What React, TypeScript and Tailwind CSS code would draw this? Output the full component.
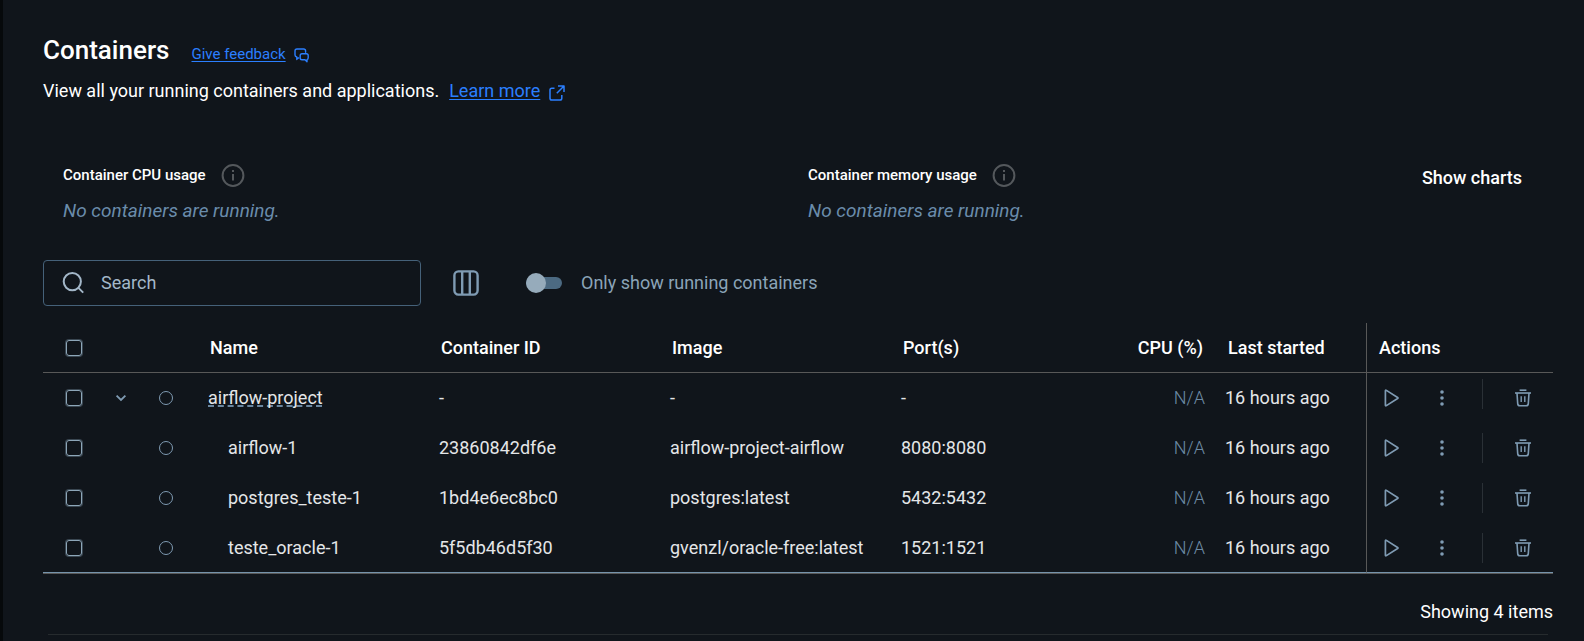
import { useState, type ReactNode } from "react";

type Row = {
  name: string;
  id: string;
  image: string;
  ports: string;
  child: boolean;
};

const rows: Row[] = [
  { name: "airflow-project", id: "-", image: "-", ports: "-", child: false },
  { name: "airflow-1", id: "23860842df6e", image: "airflow-project-airflow", ports: "8080:8080", child: true },
  { name: "postgres_teste-1", id: "1bd4e6ec8bc0", image: "postgres:latest", ports: "5432:5432", child: true },
  { name: "teste_oracle-1", id: "5f5db46d5f30", image: "gvenzl/oracle-free:latest", ports: "1521:1521", child: true },
];

function FeedbackIcon() {
  return (
    <svg width="16" height="16" viewBox="0 0 16 16" fill="none" stroke="currentColor" strokeWidth="1.4" strokeLinejoin="round" strokeLinecap="round" aria-hidden="true">
      <path d="M4.6 11 H4 L2.8 12.4 V10 Q1 9.6 1 8 V4 Q1 2 3 2 H9.6 Q11.6 2 11.6 4 V5.2" />
      <path d="M8 6.8 H12.4 Q14.2 6.8 14.2 8.6 V10.8 Q14.2 12.4 13 12.6 V14.8 L11 12.8 H8 Q6.2 12.8 6.2 11 V8.6 Q6.2 6.8 8 6.8 Z" />
    </svg>
  );
}

function ExternalIcon() {
  return (
    <svg width="18" height="18" viewBox="0 0 18 18" fill="none" stroke="currentColor" strokeWidth="1.5" strokeLinejoin="round" aria-hidden="true">
      <path d="M6.5 4.2 H3.8 Q2 4.2 2 6 V14.2 Q2 16 3.8 16 H12 Q13.8 16 13.8 14.2 V11" />
      <path d="M10 2 H16 V8 M16 2 L8.8 9.2" />
    </svg>
  );
}

function InfoIcon() {
  return (
    <svg width="24" height="24" viewBox="0 0 24 24" fill="none" stroke="currentColor" strokeWidth="2" aria-hidden="true">
      <circle cx="12" cy="12.5" r="10.4" />
      <path d="M12 11 V17.5" />
      <path d="M12 7 V9" />
    </svg>
  );
}

function SearchIcon() {
  return (
    <svg width="22" height="22" viewBox="0 0 22 22" fill="none" stroke="currentColor" strokeWidth="2" aria-hidden="true">
      <circle cx="10.3" cy="9.6" r="8.6" />
      <path d="M16.2 15.6 L21.2 20.6" />
    </svg>
  );
}

function ColumnsIcon() {
  return (
    <svg width="26" height="26" viewBox="0 0 26 26" fill="none" stroke="currentColor" strokeWidth="2.4" aria-hidden="true">
      <rect x="1.4" y="1.4" width="23.2" height="23.2" rx="4" />
      <path d="M9.2 1.5 V24.5 M16.8 1.5 V24.5" />
    </svg>
  );
}

function PlayIcon() {
  return (
    <svg width="16" height="18" viewBox="0 0 16 18" fill="none" stroke="currentColor" strokeWidth="1.7" strokeLinejoin="round" aria-hidden="true">
      <path d="M1.4 1.9 Q1.4 0.8 2.4 1.4 L13.6 8.5 Q14.4 9 13.6 9.5 L2.4 16.6 Q1.4 17.2 1.4 16.1 Z" />
    </svg>
  );
}

function DotsIcon() {
  return (
    <svg width="6" height="18" viewBox="0 0 6 18" fill="currentColor" aria-hidden="true">
      <circle cx="3" cy="3" r="1.8" />
      <circle cx="3" cy="9" r="1.8" />
      <circle cx="3" cy="15" r="1.8" />
    </svg>
  );
}

function TrashIcon() {
  return (
    <svg width="18" height="18" viewBox="0 0 18 18" fill="none" stroke="currentColor" strokeWidth="1.6" aria-hidden="true">
      <path d="M5.6 1.2 H12.4" />
      <path d="M1 4 H17" />
      <path d="M3 4 L3.7 14.6 Q3.9 16.8 5.8 16.8 H12.2 Q14.1 16.8 14.3 14.6 L15 4" />
      <path d="M7.2 7.2 V13 M10.8 7.2 V13" strokeWidth="1.4" />
    </svg>
  );
}

function ChevronIcon() {
  return (
    <svg width="12" height="8" viewBox="0 0 12 8" fill="none" stroke="currentColor" strokeWidth="1.8" aria-hidden="true">
      <path d="M1.6 1.6 L6 6 L10.4 1.6" />
    </svg>
  );
}

function Check({ label }: { label: string }) {
  return (
    <input
      type="checkbox"
      aria-label={label}
      className="block size-4 appearance-none rounded-[3px] border border-[#8da6b8] shadow-[0_0_0_1px_#3a4752] checked:bg-[#8da6b8]"
    />
  );
}

function Usage({ title }: { title: string }) {
  return (
    <section className="flex flex-col gap-3">
      <div className="flex items-center gap-[15px]">
        <h2 className="text-[15px] leading-6 font-medium">{title}</h2>
        <button type="button" aria-label={`About ${title}`} className="text-[#54585c]">
          <InfoIcon />
        </button>
      </div>
      <p className="text-[19px] leading-6 text-[#6a8cab] italic">No containers are running.</p>
    </section>
  );
}

function Th({ children, className = "px-3" }: { children?: ReactNode; className?: string }) {
  return (
    <th scope="col" className={`h-[50px] border-b border-[#585858] text-left text-lg font-medium ${className}`}>
      {children}
    </th>
  );
}

export default function App() {
  const [onlyRunning, setOnlyRunning] = useState(false);
  return (
    <div className="min-h-screen border-l-[3px] border-[#06090b] bg-[#10151b] pr-[31px] pl-10 font-[Roboto,sans-serif] text-white">
      <header className="pt-[34px]">
        <div className="flex items-baseline gap-[22px]">
          <h1 className="text-[26px] leading-8 font-medium">Containers</h1>
          <a href="#feedback" className="flex items-center gap-2 text-[15px] leading-5 text-[#2b7fff]">
            <span className="underline underline-offset-2">Give feedback</span>
            <span className="pt-0.5">
              <FeedbackIcon />
            </span>
          </a>
        </div>
        <p className="mt-[13px] flex items-center gap-[10px] text-lg leading-6">
          View all your running containers and applications.
          <a href="#learn" className="flex items-center gap-2 text-[#2b7fff]">
            <span className="underline underline-offset-2">Learn more</span>
            <span className="pt-1">
              <ExternalIcon />
            </span>
          </a>
        </p>
      </header>

      <div className="mt-[60px] flex items-start justify-between pr-[31px] pl-5">
        <div className="grid grow grid-cols-[745px_1fr]">
          <Usage title="Container CPU usage" />
          <Usage title="Container memory usage" />
        </div>
        <button type="button" className="mt-[3px] text-lg leading-6 font-medium">
          Show charts
        </button>
      </div>

      <div className="mt-[37px] flex items-center">
        <label className="flex h-[46px] w-[378px] items-center gap-[17px] rounded border border-[#456179] pl-[18px] text-[#a3b7c8]">
          <SearchIcon />
          <input
            type="search"
            aria-label="Search"
            placeholder="Search"
            className="min-w-0 grow bg-transparent text-lg outline-none placeholder:text-[#a3b7c8]"
          />
        </label>
        <button type="button" aria-label="Choose columns" className="ml-8 text-[#7f9bb3]">
          <ColumnsIcon />
        </button>
        <label className="ml-[47px] flex items-center gap-[19px] text-lg text-[#8ba4b8]">
          <span className="grid h-5 w-9 items-center">
            <input
              type="checkbox"
              role="switch"
              checked={onlyRunning}
              onChange={(e) => setOnlyRunning(e.target.checked)}
              className="peer col-start-1 row-start-1 h-3 w-9 appearance-none rounded-full bg-[#4c6a82]"
            />
            <span className="col-start-1 row-start-1 size-5 rounded-full bg-[#96abbb] peer-checked:justify-self-end" />
          </span>
          Only show running containers
        </label>
      </div>

      <table className="mt-[17px] w-full table-fixed border-separate border-spacing-0 border-b border-[#585858] text-lg leading-6">
        <colgroup>
          <col className="w-[55px]" />
          <col className="w-[45px]" />
          <col className="w-[55px]" />
          <col />
          <col />
          <col />
          <col />
          <col className="w-[93px]" />
          <col className="w-[151px]" />
          <col className="w-[187px]" />
        </colgroup>
        <thead>
          <tr>
            <Th className="pl-[23px]">
              <Check label="Select all containers" />
            </Th>
            <Th />
            <Th />
            <Th>Name</Th>
            <Th>Container ID</Th>
            <Th>Image</Th>
            <Th>Port(s)</Th>
            <Th className="pr-3 text-right! whitespace-nowrap">CPU (%)</Th>
            <Th className="px-[13px] whitespace-nowrap">Last started</Th>
            <Th className="border-l px-3">Actions</Th>
          </tr>
        </thead>
        <tbody>
          {rows.map((row) => (
            <tr
              key={row.name}
              className="[&>td]:h-[50px] [&>td]:px-[10px] last:[&>td]:border-b last:[&>td]:border-b-[#7593ab]"
            >
              <td>
                <div className="pl-[13px]">
                  <Check label={`Select ${row.name}`} />
                </div>
              </td>
              <td>
                {!row.child && (
                  <button type="button" aria-label="Collapse group" className="block pl-[7px] text-[#7f9bb3]">
                    <ChevronIcon />
                  </button>
                )}
              </td>
              <td>
                <div className="ml-[6px] size-[14px] rounded-full border border-[#7f9bb3]" />
              </td>
              <td className="text-[#e4e6e8]">
                {row.child ? (
                  <div className="pl-5">{row.name}</div>
                ) : (
                  <a
                    href="#airflow-project"
                    className="underline decoration-[#6a86a0] decoration-dashed decoration-2 underline-offset-1 [text-decoration-skip-ink:none]"
                  >
                    {row.name}
                  </a>
                )}
              </td>
              <td className="text-[#e4e6e8]">{row.id}</td>
              <td className="whitespace-nowrap text-[#e4e6e8]">{row.image}</td>
              <td className="text-[#e4e6e8]">{row.ports}</td>
              <td className="text-right font-light text-[#6c8aa4]">N/A</td>
              <td className="whitespace-nowrap text-[#e4e6e8]">16 hours ago</td>
              <td className="border-l border-[#585858]">
                <div className="flex items-center pl-[7px] text-[#7f9bb3]">
                  <button type="button" aria-label={`Start ${row.name}`}>
                    <PlayIcon />
                  </button>
                  <button type="button" aria-label={`More actions for ${row.name}`} className="ml-[39px]">
                    <DotsIcon />
                  </button>
                  <span className={`ml-[37px] h-[30px] w-px bg-[#2a3036] ${row.child ? "" : "-mt-2"}`} />
                  <button type="button" aria-label={`Delete ${row.name}`} className="ml-[31px]">
                    <TrashIcon />
                  </button>
                </div>
              </td>
            </tr>
          ))}
        </tbody>
      </table>

      <footer className="pt-[26px]">
        <p className="text-right text-lg leading-6">Showing 4 items</p>
        <div className="mx-[5px] mt-[10px] border-t border-[#262b2e]" />
      </footer>
    </div>
  );
}
